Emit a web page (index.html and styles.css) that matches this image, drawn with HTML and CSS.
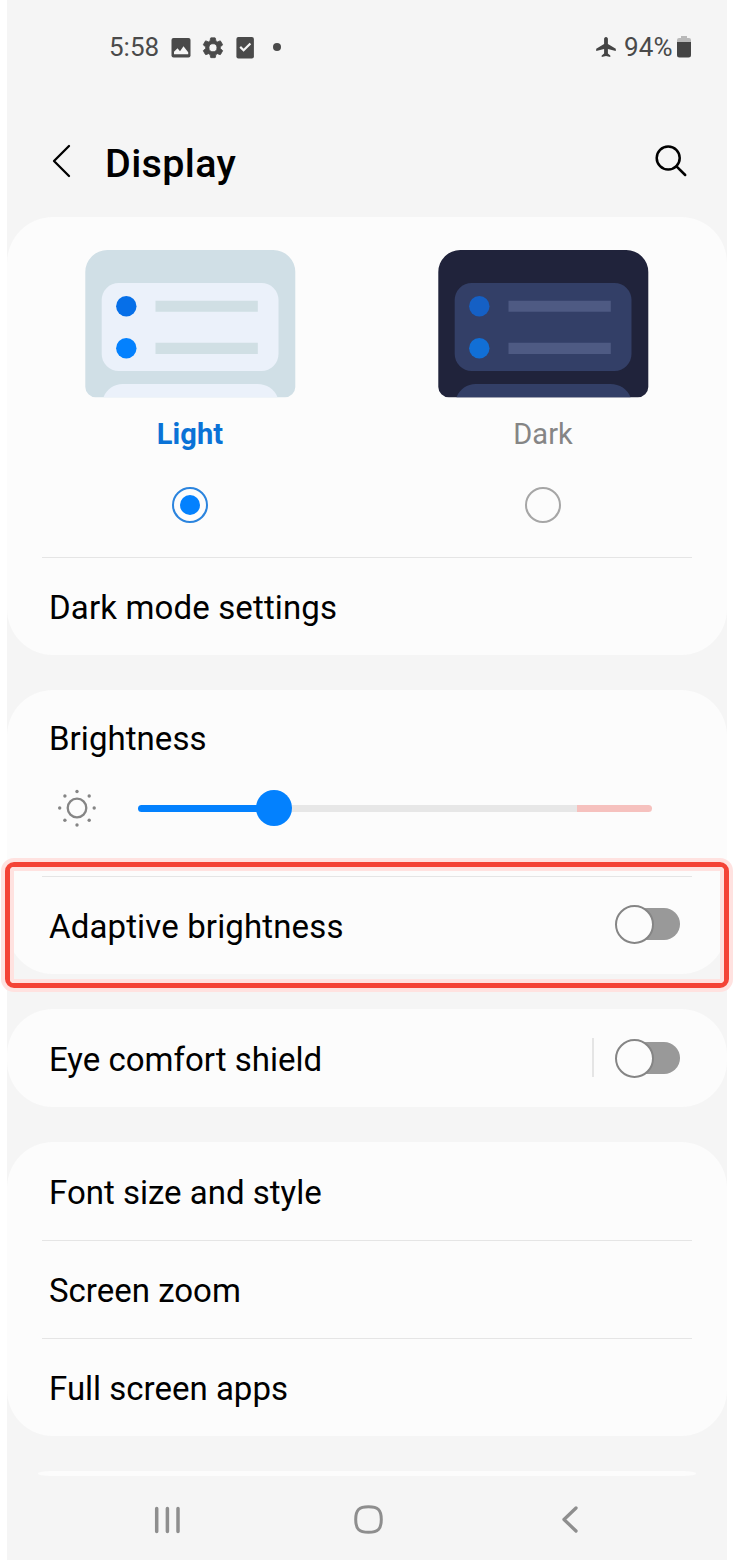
FILE: index.html
```html
<!DOCTYPE html>
<html lang="en">
<head>
<meta charset="utf-8">
<title>Display</title>
<link rel="stylesheet" href="styles.css">
</head>
<body>
<div class="phone">
  <div class="status">
    <span class="time">5:58</span>
    <svg class="status-icons" width="120" height="30" viewBox="0 0 120 30" fill="#4a4a4a">
      <rect x="2.500" y="5" width="19" height="19.500" rx="2"/>
      <path d="M5 21.200V18.700L8.500 15.200L11 18.200L14.500 13.200L19.200 19.200V21.200Z" fill="#f5f5f5"/>
      <g transform="translate(31.600 2.400) scale(1.030)" stroke="#4a4a4a" stroke-width=".8"><path d="M19.140 12.940c.04-.3.060-.610.060-.940s-.020-.640-.070-.940l2.030-1.580a.49.490 0 0 0 .120-.610l-1.920-3.320a.49.490 0 0 0-.590-.220l-2.390.960a7 7 0 0 0-1.620-.940l-.360-2.540A.48.480 0 0 0 13.920 2.400h-3.840a.47.470 0 0 0-.470.410l-.360 2.540c-.590.240-1.130.570-1.620.940l-2.390-.960a.48.480 0 0 0-.590.220L2.740 8.870a.48.480 0 0 0 .120.610l2.030 1.580a6 6 0 0 0 0 1.880l-2.030 1.580a.49.490 0 0 0-.120.610l1.920 3.320c.120.220.370.290.590.220l2.390-.960c.5.380 1.030.700 1.620.940l.360 2.540c.050.240.240.410.480.410h3.840c.240 0 .440-.170.470-.410l.360-2.540a7 7 0 0 0 1.620-.940l2.390.960c.220.080.470 0 .590-.220l1.920-3.320a.48.480 0 0 0-.120-.610zM12 15.900a3.900 3.900 0 1 1 0-7.800 3.900 3.900 0 0 1 0 7.800"/></g>
      <rect x="67.400" y="3.900" width="17.500" height="21.500" rx="2"/>
      <path d="M71.200 13.900L74.600 17.300L81.400 10.500" fill="none" stroke="#f5f5f5" stroke-width="2.200"/>
      <circle cx="108" cy="14" r="4"/>
    </svg>
    <svg class="plane" width="22" height="22" viewBox="0 0 22 22" fill="#444"><path d="M11 1C12.300 1 12.900 2 12.900 3V8L20.800 12.800V15L12.900 12.900V17.500L15.300 19.400V21L11 20L6.700 21V19.400L9.100 17.500V12.900L1.200 15V12.800L9.100 8V3C9.100 2 9.700 1 11 1Z"/></svg>
    <span class="percent">94%</span>
    <svg class="battery" width="14" height="22" viewBox="0 0 14 22"><path d="M4 0H10V2H12A2 2 0 0 1 14 4V7H0V4A2 2 0 0 1 2 2H4Z" fill="#b9b9b9"/><path d="M0 6H14V19A2.500 2.500 0 0 1 11.500 21.500H2.500A2.500 2.500 0 0 1 0 19Z" fill="#444"/></svg>
  </div>

  <header class="header">
    <svg class="back" width="24" height="36" viewBox="0 0 24 36"><path d="M19 3L4 18L19 33" fill="none" stroke="#000" stroke-width="2.300" stroke-linecap="round" stroke-linejoin="round"/></svg>
    <h1 class="title">Display</h1>
    <svg class="search" width="36" height="36" viewBox="0 0 36 36" fill="none" stroke="#000" stroke-width="2.500" stroke-linecap="round"><circle cx="15.200" cy="15" r="11.500"/><path d="M23.500 23.300L32.200 32"/></svg>
  </header>

  <section class="card">
    <div class="modes">
      <div class="mode light">
        <svg width="212" height="148" viewBox="0 0 212 148">
          <path class="p-bg" d="M1.300 22A22 22 0 0 1 23.300 0H189.300A22 22 0 0 1 211.300 22V137A10.500 10.500 0 0 1 200.800 147.300H11.800A10.500 10.500 0 0 1 1.300 137Z"/>
          <rect class="p-card" x="17.700" y="33" width="176.800" height="88" rx="17"/>
          <path class="p-card" d="M19.500 147.300C22.500 139 30.500 134 38.500 134H173.500C182.500 134 190.500 139 193.500 147.300Z"/>
          <circle class="p-dot1" cx="42.300" cy="56.200" r="10.200"/><circle class="p-dot2" cx="42.300" cy="98.200" r="10.200"/>
          <path class="p-line" d="M71.500 50.700H173.800V61.800H71.500ZM71.500 92.800H173.800V103.900H71.500Z"/>
        </svg>
        <span class="mode-name">Light</span>
        <span class="radio on"></span>
      </div>
      <div class="mode dark">
        <svg width="212" height="148" viewBox="0 0 212 148">
          <path class="p-bg" d="M1.300 22A22 22 0 0 1 23.300 0H189.300A22 22 0 0 1 211.300 22V137A10.500 10.500 0 0 1 200.800 147.300H11.800A10.500 10.500 0 0 1 1.300 137Z"/>
          <rect class="p-card" x="17.700" y="33" width="176.800" height="88" rx="17"/>
          <path class="p-card" d="M19.500 147.300C22.500 139 30.500 134 38.500 134H173.500C182.500 134 190.500 139 193.500 147.300Z"/>
          <circle class="p-dot1" cx="42.300" cy="56.200" r="10.200"/><circle class="p-dot2" cx="42.300" cy="98.200" r="10.200"/>
          <path class="p-line" d="M71.500 50.700H173.800V61.800H71.500ZM71.500 92.800H173.800V103.900H71.500Z"/>
        </svg>
        <span class="mode-name">Dark</span>
        <span class="radio"></span>
      </div>
    </div>
    <div class="row ruled"><span class="wide">Dark mode settings</span></div>
  </section>

  <section class="card">
    <div class="brightness">
      <span class="label">Brightness</span>
      <div class="slider-row">
        <svg width="40" height="40" viewBox="0 0 40 40" fill="#858585"><circle cx="20" cy="20" r="9.300" fill="none" stroke="#858585" stroke-width="2.300"/><circle cx="20" cy="3.500" r="1.700"/><circle cx="20" cy="37" r="1.700"/><circle cx="2.700" cy="20" r="1.700"/><circle cx="37.200" cy="20" r="1.700"/><circle cx="7.900" cy="8" r="1.700"/><circle cx="32.200" cy="8" r="1.700"/><circle cx="7.900" cy="32.200" r="1.700"/><circle cx="32.200" cy="32.200" r="1.700"/></svg>
        <div class="slider"><span class="filled"></span><span class="knob"></span><span class="rest"></span><span class="hot"></span></div>
      </div>
    </div>
    <div class="row ruled"><span class="wide">Adaptive brightness</span><span class="toggle"></span><div class="highlight"></div></div>
  </section>

  <section class="card">
    <div class="row eye"><span>Eye comfort shield</span><span class="bar"></span><span class="toggle"></span></div>
  </section>

  <section class="card">
    <div class="row"><span>Font size and style</span></div>
    <div class="row ruled"><span>Screen zoom</span></div>
    <div class="row ruled"><span>Full screen apps</span></div>
  </section>

  <div class="sliver"></div>
  <nav class="nav">
    <svg width="28" height="30" viewBox="0 0 28 30"><path d="M3.700 3.500V26.500M14.400 3.500V26.500M25 3.500V26.500" stroke="#8e8e8e" stroke-width="3.500" stroke-linecap="round"/></svg>
    <svg class="home" width="30" height="30" viewBox="0 0 30 30"><path d="M14.500 1.700C24 1.700 27.300 5 27.300 14.500S24 27.300 14.500 27.300S1.700 24 1.700 14.500S5 1.700 14.500 1.700Z" fill="none" stroke="#8e8e8e" stroke-width="3"/></svg>
    <svg width="20" height="30" viewBox="0 0 20 30"><path d="M16 3L4 14.500L16 26" fill="none" stroke="#8e8e8e" stroke-width="3.300" stroke-linecap="round" stroke-linejoin="round"/></svg>
  </nav>
</div>
</body>
</html>
```
FILE: styles.css
```css
*, *::before, *::after { box-sizing: border-box; }
body { margin: 0; background: #fff; font-family: Roboto, sans-serif; color: #000; }
svg { display: block; flex: none; }
.phone { width: 720px; height: 1560px; margin: 0 auto; background: #f5f5f5; display: flex; flex-direction: column; }
.status { height: 94px; padding: 0 36px 0 102px; display: flex; align-items: center; font-size: 26px; line-height: 30px; color: #4a4a4a; white-space: nowrap; }
.time { width: 60px; }
.status-icons { margin-top: 2px; }
.plane { margin-left: auto; }
.percent { width: 50px; margin: 0 3px 0 7px; letter-spacing: .1px; }
.header { height: 123px; padding: 15px 38px 0 43px; display: flex; align-items: center; }
.header .back { margin-top: -4px; }
.title { margin: 2px auto 0 31px; font-size: 39.5px; font-weight: 500; line-height: 50px; letter-spacing: .35px; }
.search { margin-top: -4px; }
.card { background: #fcfcfc; border-radius: 46px; margin-bottom: 35px; flex: none; }
.modes { height: 340px; padding: 33px 78px 0 77px; display: flex; justify-content: space-between; }
.mode { width: 212px; display: flex; flex-direction: column; align-items: center; }
.mode-name { margin-top: 18px; font-size: 29px; line-height: 36px; color: #858585; }
.light .mode-name { color: #0a72d6; font-weight: 700; letter-spacing: .1px; }
.radio { width: 36px; height: 36px; margin-top: 35px; border: 2px solid #a6a6a6; border-radius: 50%; display: grid; place-items: center; }
.radio.on { border-color: #2b84de; }
.radio.on::after { content: ""; width: 20px; height: 20px; border-radius: 50%; background: #0381fe; }
.light .p-bg { fill: #d0dfe6; }
.light .p-card { fill: #ebf1fa; }
.light .p-line { fill: #d0dfe4; }
.light .p-dot1 { fill: #066fe8; }
.light .p-dot2 { fill: #0381fe; }
.dark .p-bg { fill: #20233b; }
.dark .p-card { fill: #333f67; }
.dark .p-line { fill: #4e5a83; }
.dark .p-dot1 { fill: #1560c5; }
.dark .p-dot2 { fill: #116fd6; }
.row { position: relative; height: 98px; padding: 4px 47px 0 42px; display: flex; align-items: center; font-size: 33px; line-height: 40px; white-space: nowrap; }
.wide { letter-spacing: .14px; }
.ruled::before { content: ""; position: absolute; top: 0; left: 35px; right: 35px; height: 1px; background: #e5e5e5; }
.brightness { height: 186px; padding: 29px 75px 0 42px; }
.label { display: block; width: max-content; font-size: 33px; line-height: 40px; letter-spacing: .05px; }
.slider-row { display: flex; align-items: center; gap: 41px; margin: 29px 0 0 8px; }
.slider { flex: 1; display: flex; align-items: center; }
.filled { width: 119px; height: 7px; border-radius: 4px 0 0 4px; background: #0381fe; }
.knob { position: relative; width: 36px; height: 36px; margin: 0 -1px; border-radius: 50%; background: #0381fe; }
.rest { flex: 1; height: 7px; background: #e7e7e7; }
.hot { width: 75px; height: 7px; border-radius: 0 4px 4px 0; background: #f6c1be; }
.toggle { position: relative; width: 65px; height: 39px; margin: -6px 0 0 auto; display: flex; }
.toggle::before { content: ""; position: absolute; left: 16px; right: 0; top: 3px; height: 32px; border-radius: 16px; background: #999; }
.toggle::after { content: ""; position: relative; width: 39px; height: 39px; border-radius: 50%; border: 2px solid #858585; background: #fcfcfc; }
.bar { width: 2px; height: 39px; margin: -6px 21px 0 auto; background: #e5e5e5; }
.eye .toggle { margin: -4px 0 0 0; }
.highlight { position: absolute; left: -6px; right: -6px; top: -18px; height: 134px; border: 4px solid #ffe2e0; border-radius: 13px; }
.highlight::before { content: ""; position: absolute; inset: 0; border: 5px solid #f44336; border-radius: 9px; }
.highlight::after { content: ""; position: absolute; inset: 5px; border: 4px solid #ffe2e0; border-radius: 4px; }
.sliver { height: 5px; margin: 0 31px; background: #fcfcfc; flex: none; border-radius: 16px / 3px; }
.nav { padding: 29px 147px 0 146px; display: flex; justify-content: space-between; }
.home { margin-right: 4px; }
```
